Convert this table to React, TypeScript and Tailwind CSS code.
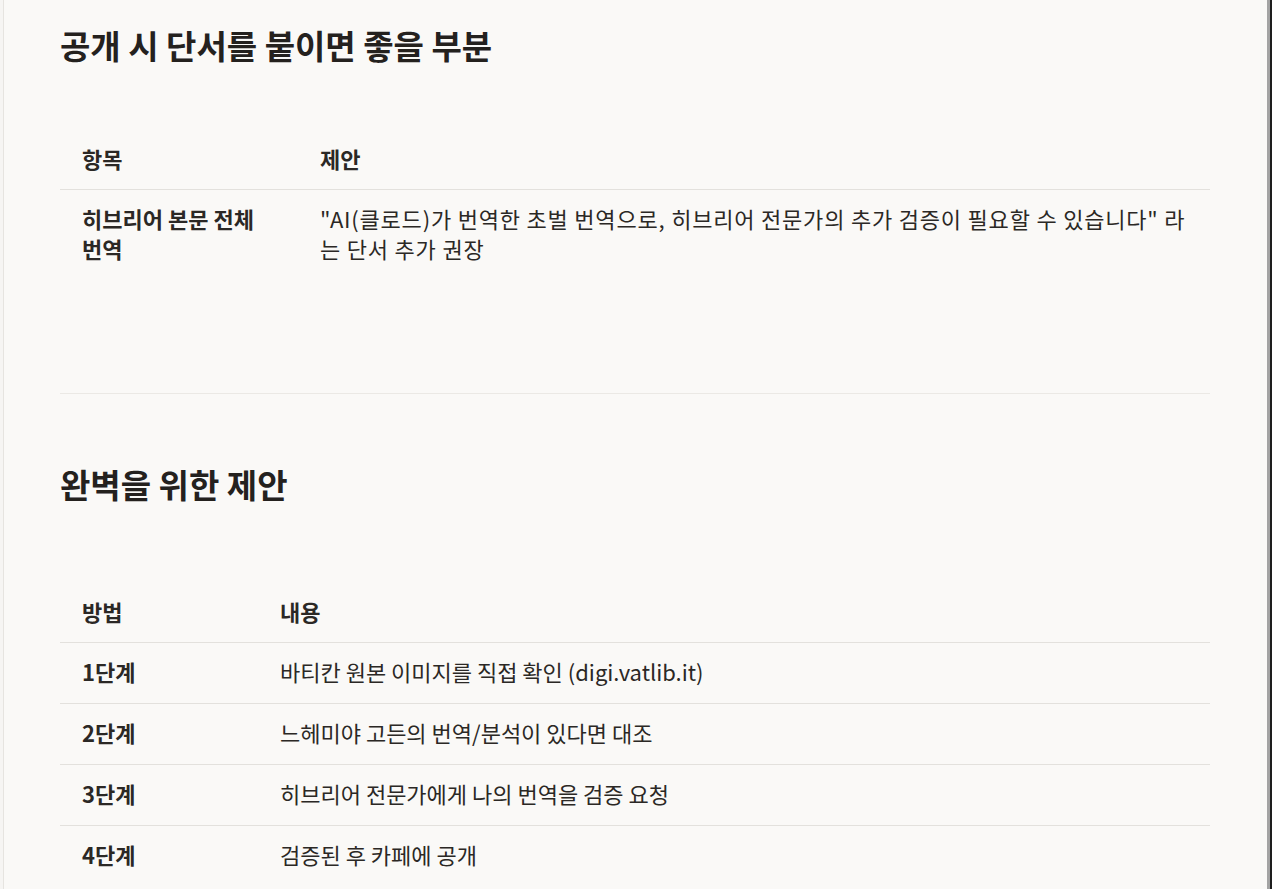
import React from "react";

const font = { fontFamily: '"Noto Sans CJK KR", "Noto Sans", sans-serif' };

function Table({
  col1,
  head,
  rows,
  wide,
}: {
  col1: string;
  head: [string, string];
  rows: [string, string][];
  wide?: boolean;
}) {
  return (
    <table className="w-[1150px] border-collapse text-[22px] leading-[30px] text-[#2b2825]">
      <thead>
        <tr className="border-b border-[#e3e1dd]">
          <th className={`${col1} pl-[22px] pr-5 pt-[14px] pb-[16px] text-left font-bold align-top`}>{head[0]}</th>
          <th className="px-5 pt-[14px] pb-[16px] text-left font-bold align-top">{head[1]}</th>
        </tr>
      </thead>
      <tbody>
        {rows.map((r, i) => (
          <tr key={i} className={i < rows.length - 1 ? "border-b border-[#e3e1dd]" : ""}>
            <td className="pl-[22px] pr-5 pt-[13px] pb-[17px] font-bold align-top break-keep">{r[0]}</td>
            <td
              className={`px-5 pt-[13px] pb-[17px] font-normal align-top ${wide ? "tracking-[0.8px]" : ""}`}
            >
              {r[1]}
            </td>
          </tr>
        ))}
      </tbody>
    </table>
  );
}

export default function App() {
  return (
    <div className="flex h-[889px] w-[1272px] overflow-hidden bg-[#faf9f7]" style={font}>
      <div className="w-[3px] bg-[#f6f5f3]" />
      <div className="w-px bg-[#e6e4e0]" />
      <div className="flex-1 pl-[56px]">
        <h2 className="pt-[25px] text-[33px] font-bold leading-[40px] text-[#24211e]">
          공개 시 단서를 붙이면 좋을 부분
        </h2>
        <div className="mt-[64px]">
          <Table
            col1="w-[240px]"
            head={["항목", "제안"]}
            wide
            rows={[
              [
                "히브리어 본문 전체 번역",
                "\"AI(클로드)가 번역한 초벌 번역으로, 히브리어 전문가의 추가 검증이 필요할 수 있습니다\" 라는 단서 추가 권장",
              ],
            ]}
          />
        </div>
        <div className="mt-[113px] h-px w-[1150px] bg-[#ebe9e5]" />
        <h2 className="mt-[70px] text-[33px] font-bold leading-[40px] text-[#24211e]">
          완벽을 위한 제안
        </h2>
        <div className="mt-[78px]">
          <Table
            col1="w-[200px]"
            head={["방법", "내용"]}
            rows={[
              ["1단계", "바티칸 원본 이미지를 직접 확인 (digi.vatlib.it)"],
              ["2단계", "느헤미야 고든의 번역/분석이 있다면 대조"],
              ["3단계", "히브리어 전문가에게 나의 번역을 검증 요청"],
              ["4단계", "검증된 후 카페에 공개"],
            ]}
          />
        </div>
      </div>
      <div className="w-[3px] bg-[#a3a3a3]" />
      <div className="w-[2px] bg-[#1e1e1e]" />
    </div>
  );
}
